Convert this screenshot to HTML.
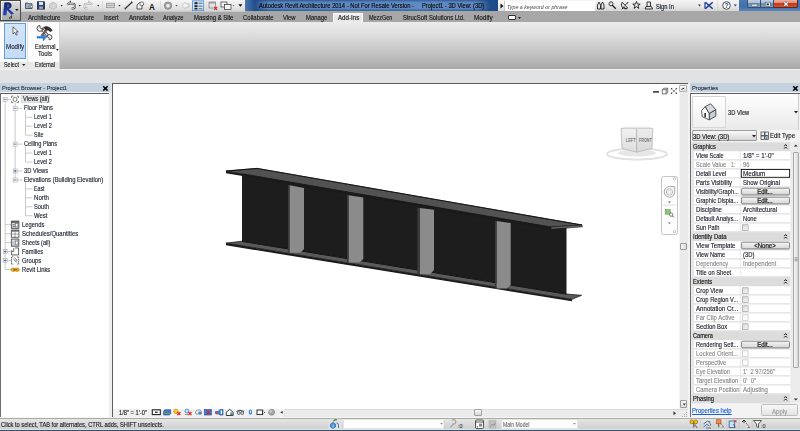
<!DOCTYPE html>
<html><head><meta charset="utf-8">
<style>
*{box-sizing:border-box;margin:0;padding:0}
html,body{width:800px;height:431px;overflow:hidden;background:#e1e2e4;font-family:"Liberation Sans",sans-serif;font-size:5.8px;color:#1a1a1a;position:relative}
.a{position:absolute}
.t{position:absolute;white-space:pre;line-height:1;transform-origin:0 0;-webkit-text-stroke:0.14px currentColor}
svg{position:absolute;overflow:visible}
</style></head><body>
<div class="a" style="left:0px;top:0px;width:800px;height:11.25px;background:linear-gradient(#f6f6f6,#e6e6e6 60%,#d6d6d6)"></div>
<div class="a" style="left:245px;top:0px;width:253px;height:11.25px;background:linear-gradient(90deg,#4a78b2 0%,#1f4c88 4%,#23508c 30%,#2a5a96 70%,#24528e 92%,#1c4a86 100%)"></div>
<div class="a" style="left:254px;top:1.2px;width:236px;height:8.8px;background:linear-gradient(90deg,rgba(120,160,215,0),rgba(120,160,215,0.7) 6%,rgba(120,160,215,0.7) 94%,rgba(120,160,215,0));border-radius:4px;filter:blur(1px)"></div>
<div class="t" style="left:259px;top:3px;font-size:6.4px;color:#0a0a0a;transform:scaleX(0.9110);">Autodesk Revit Architecture 2014 - Not For Resale Version -</div>
<div class="t" style="left:422px;top:3px;font-size:6.4px;color:#0a0a0a;transform:scaleX(0.9058);">Project1 - 3D View: (3D)</div>
<div class="a" style="left:498px;top:0.5px;width:7px;height:10.5px;background:linear-gradient(#fafafa,#dcdcdc);border-right:1px solid #c8c8c8"></div>
<svg style="left:500px;top:3px" width="4" height="6"><polygon points="0.5,0.5 3.5,3 0.5,5.5" fill="#111"/></svg>
<div class="a" style="left:505px;top:1px;width:90px;height:9.5px;background:#fff"></div>
<div class="t" style="left:506.8px;top:5px;font-size:5.8px;color:#4a4a4a;transform:scaleX(0.9085);font-style:italic;-webkit-text-stroke:0">Type a keyword or phrase</div>
<div class="a" style="left:739px;top:0px;width:61px;height:11.25px;background:linear-gradient(#4f7bb0,#4070a8 60%,#5a86bc)"></div>
<div class="a" style="left:747px;top:0px;width:14.3px;height:8.3px;background:linear-gradient(#c4d2e2,#a6bad2 45%,#6f8db2 50%,#7c9aba);border:0.7px solid #34506e;border-top:none;border-radius:0 0 0 2.5px"></div>
<div class="a" style="left:761.3px;top:0px;width:12.9px;height:8.3px;background:linear-gradient(#c4d2e2,#a6bad2 45%,#6f8db2 50%,#7c9aba);border:0.7px solid #34506e;border-top:none;border-left:none"></div>
<div class="a" style="left:774.2px;top:0px;width:24.2px;height:8.3px;background:linear-gradient(#eab0a2,#dd8a78 45%,#c8381a 50%,#d2502e);border:0.7px solid #5a2a22;border-top:none;border-left:none;border-radius:0 0 2.5px 0"></div>
<svg style="left:0;top:0" width="800" height="11" viewBox="0 0 800 11">
<rect x="751.6" y="4.2" width="5.6" height="2" rx="0.4" fill="#fff" stroke="#2a3a50" stroke-width="0.5"/>
<rect x="765.2" y="2.2" width="5" height="4.4" fill="#fff" stroke="#2a3a50" stroke-width="0.5"/><rect x="766.5" y="3.4" width="2.4" height="2" fill="#2a3a50"/>
<path d="M784.2,2.2 l3.6,3.6 M787.8,2.2 l-3.6,3.6" stroke="#5a2018" stroke-width="2.3"/>
<path d="M784.2,2.2 l3.6,3.6 M787.8,2.2 l-3.6,3.6" stroke="#fff" stroke-width="1.3"/>
</svg>
<div class="a" style="left:0px;top:11.25px;width:800px;height:10.75px;background:#a7a7a7"></div>
<div class="a" style="left:20.5px;top:11.25px;width:224.5px;height:0.8px;background:#c8c8c8"></div>
<div class="a" style="left:333.1px;top:13.2px;width:29.5px;height:9px;background:linear-gradient(#eeeeee,#e4e4e4 60%,#ececec);border:1px solid #fbfbfb;border-bottom:none;border-radius:1px 1px 0 0"></div>
<div class="t" style="left:27.5px;top:15px;font-size:6.6px;color:#15171a;transform:scaleX(0.9236);">Architecture</div>
<div class="t" style="left:70px;top:15px;font-size:6.6px;color:#15171a;transform:scaleX(0.8967);">Structure</div>
<div class="t" style="left:104px;top:15px;font-size:6.6px;color:#15171a;transform:scaleX(0.8788);">Insert</div>
<div class="t" style="left:128.5px;top:15px;font-size:6.6px;color:#15171a;transform:scaleX(0.9316);">Annotate</div>
<div class="t" style="left:163.1px;top:15px;font-size:6.6px;color:#15171a;transform:scaleX(0.8778);">Analyze</div>
<div class="t" style="left:193.75px;top:15px;font-size:6.6px;color:#15171a;transform:scaleX(0.8958);">Massing &amp; Site</div>
<div class="t" style="left:243.1px;top:15px;font-size:6.6px;color:#15171a;transform:scaleX(0.9071);">Collaborate</div>
<div class="t" style="left:283.1px;top:15px;font-size:6.6px;color:#15171a;transform:scaleX(0.8811);">View</div>
<div class="t" style="left:306.25px;top:15px;font-size:6.6px;color:#15171a;transform:scaleX(0.8912);">Manage</div>
<div class="t" style="left:337.75px;top:15px;font-size:6.6px;color:#15171a;transform:scaleX(0.9347);">Add-Ins</div>
<div class="t" style="left:368.75px;top:15px;font-size:6.6px;color:#15171a;transform:scaleX(0.8292);">MezzGen</div>
<div class="t" style="left:402.75px;top:15px;font-size:6.6px;color:#15171a;transform:scaleX(0.8940);">StrucSoft Solutions Ltd.</div>
<div class="t" style="left:474px;top:15px;font-size:6.6px;color:#15171a;transform:scaleX(0.9654);">Modify</div>
<div class="a" style="left:508px;top:14.5px;width:8px;height:5px;background:#fff;border:1px solid #333;border-radius:1px"></div>
<svg style="left:518px;top:16.5px" width="4" height="3"><polygon points="0,0 3,0 1.5,2" fill="#222"/></svg>
<div class="a" style="left:0px;top:0px;width:20.8px;height:21px;background:linear-gradient(#dcdcdc,#c4c4c4 50%,#a9a9a9);border:1px solid #4a4a4a;box-shadow:inset 0.8px 0.8px 0 #f4f4f4"></div>
<svg style="left:0;top:0" width="21" height="21" viewBox="0 0 21 21">
<defs><linearGradient id="rg" x1="0" y1="0" x2="0" y2="1"><stop offset="0" stop-color="#0f2160"/><stop offset="0.5" stop-color="#1a3590"/><stop offset="1" stop-color="#2648b8"/></linearGradient></defs>
<path d="M4.4,2.6 L7.4,2.2 C11.8,1.6 12.6,6.2 10.6,8 C10,8.5 9.4,8.8 8.8,9 L14,13.6 L11.4,14.8 L6.9,10 L6.6,15.2 L3,15.2 Z" fill="url(#rg)"/>
<path d="M7.2,4.2 C9.2,4 9.8,6.4 8.2,7.2 L7,7.4 Z" fill="#c8c8c8" opacity="0.35"/>
<polygon points="15.2,9 18.6,9 16.9,11" fill="#111"/>
<path d="M9,18.2 L11.6,15.6 L11.6,18.2 Z" fill="none" stroke="#222" stroke-width="0.7"/>
</svg>
<svg style="left:0;top:0" width="245" height="11" viewBox="0 0 245 11">
<path d="M25.5,3 h2.5 l0.8,0.8 h3.2 v4.7 h-6.5z" fill="#9fb1c6" stroke="#2f3b4a" stroke-width="0.8"/>
<path d="M28.5,6.2 h2.5 v-1.2 l2,1.6 l-2,1.6 v-1.2 h-2.5z" fill="#fff" stroke="#333" stroke-width="0.4"/>
<rect x="37.4" y="1.8" width="7.2" height="7.3" fill="#28406a" stroke="#151d2c" stroke-width="0.7"/><rect x="39" y="2.1" width="4" height="2.8" fill="#e8eef6"/><rect x="39.2" y="6.4" width="3.6" height="2.5" fill="#9aaac0"/>
<path d="M49.5,4 l3.5,-2 l3.5,2 v3.5 l-3.5,2 l-3.5,-2z" fill="#cfcfcf" stroke="#b4b4b4" stroke-width="0.6"/><path d="M49.5,4 l3.5,2 l3.5,-2 M53,6 v3.5" fill="none" stroke="#e8e8e8" stroke-width="0.5"/>
<polygon points="60.6,4.9 62.8,4.9 61.7,6.4" fill="#222"/>
<path d="M67.2,4.8 L70,2.4 V3.8 H72.8 C75.6,3.8 75.8,8.6 72.6,8.6 H71.5" fill="none" stroke="#4a4a4a" stroke-width="2"/>
<path d="M67.2,4.8 L70,2.4 V3.8 H72.8 C75.6,3.8 75.8,8.6 72.6,8.6 H71.5" fill="none" stroke="#fafafa" stroke-width="0.8"/>
<polygon points="78.6,4.9 80.8,4.9 79.7,6.4" fill="#222"/>
<path d="M92.2,4.8 L89.4,2.4 V3.8 H86.6 C83.8,3.8 83.6,8.6 86.8,8.6 H87.9" fill="none" stroke="#b0b0b0" stroke-width="2"/>
<path d="M92.2,4.8 L89.4,2.4 V3.8 H86.6 C83.8,3.8 83.6,8.6 86.8,8.6 H87.9" fill="none" stroke="#f4f4f4" stroke-width="0.8"/>
<polygon points="97.1,4.9 99.3,4.9 98.2,6.4" fill="#222"/>
<rect x="102.3" y="0.8" width="0.6" height="9.8" fill="#d0d0d0"/>
<rect x="106.5" y="3.2" width="8" height="4.5" fill="#d6d6d6" stroke="#8a8a8a" stroke-width="0.7"/><path d="M106.5,5.4 h8" stroke="#8a8a8a" stroke-width="0.6"/>
<polygon points="118.4,4.9 120.6,4.9 119.5,6.4" fill="#222"/>
<path d="M125,8.8 L132,2.2" stroke="#333" stroke-width="1.2"/><path d="M124.2,7.8 l1.8,1.8 M131.2,1.4 l1.8,1.8" stroke="#333" stroke-width="0.8"/>
<path d="M137,9 v-4 l2.5,-2.5 l2.5,2.5 v4z" fill="#eee" stroke="#333" stroke-width="0.8"/><circle cx="141.8" cy="3.8" r="1.9" fill="#fff" stroke="#333" stroke-width="0.7"/>
<text x="149" y="9.8" font-family="Liberation Sans" font-size="9.5" font-weight="bold" fill="#111" transform="translate(149 0) scale(0.85 1) translate(-149 0)">A</text>
<rect x="160.4" y="0.8" width="0.6" height="9.8" fill="#d0d0d0"/>
<circle cx="168" cy="5.6" r="3.7" fill="#bcbcbc" stroke="#6a6a6a" stroke-width="0.7"/><path d="M165.8,4.6 l2.2,-1.2 l2.2,1.2 v2.4 l-2.2,1.2 l-2.2,-1.2z" fill="#f2f2f2" stroke="#555" stroke-width="0.5"/>
<polygon points="175.4,4.9 177.6,4.9 176.5,6.4" fill="#444"/>
<path d="M182,5.5 l3,-3 l1.5,1.5 h2.5 v3 h-2.5 l-1.5,1.5z" fill="#f4f4f4" stroke="#b0b0b0" stroke-width="0.7"/>
<rect x="192.4" y="0.8" width="11.3" height="9.8" fill="#cde2f7" stroke="#4d8fd6" stroke-width="0.8"/>
<rect x="194.5" y="2.2" width="3" height="2" fill="#222"/><rect x="194.5" y="5.2" width="3" height="2" fill="#222"/><rect x="194.5" y="8" width="3" height="1.5" fill="#222"/>
<path d="M198.5,3.2 h4 M198.5,6.2 h4 M198.5,8.8 h4" stroke="#333" stroke-width="0.7"/>
<rect x="206" y="0.8" width="0.6" height="9.8" fill="#d0d0d0"/>
<rect x="209" y="2" width="6.5" height="6" fill="#e4e4e4" stroke="#777" stroke-width="0.7"/><rect x="209" y="2" width="6.5" height="1.5" fill="#999"/>
<path d="M214.2,6.8 l3,3 M217.2,6.8 l-3,3" stroke="#e02020" stroke-width="1.1"/>
<rect x="221" y="2" width="6" height="5" fill="#f4f4f4" stroke="#333" stroke-width="0.7"/><rect x="224.5" y="4.5" width="6.5" height="5" fill="#f4f4f4" stroke="#333" stroke-width="0.7"/>
<polygon points="232.5,4.9 234.5,4.9 233.5,6.3" fill="#666"/>
<polygon points="238.4,4.3 242.4,4.3 240.4,6.8" fill="#111"/>
</svg>
<svg style="left:0;top:0" width="800" height="11" viewBox="0 0 800 11">
<g stroke="#222" stroke-width="0.9" fill="none">
<path d="M597.5,9 v-4 l1.5,-3 l1.5,3 v4 z M601,9 v-4 l1.5,-3 l1.5,3 v4z"/>
<circle cx="611" cy="3.8" r="2"/><path d="M612.3,5.2 l3.5,3.5" stroke-width="1.3"/>
<path d="M621.8,9.3 l2.2,-2.6 l2.2,2.6 M622.2,2.4 a4,4 0 0 0 5.6,5.6 z M625,5.3 l2.6,-2.6 M627.6,2 v1.4"/>
<path d="M636.5,1.5 l1,2.6 h2.7 l-2.2,1.6 l0.9,2.7 l-2.4,-1.7 l-2.4,1.7 l0.9,-2.7 l-2.2,-1.6 h2.7z"/>
<path d="M647,6 v-4 h3.5 v4 M645,9 h7.5 l-1,-2.5 h-5.5z"/>
</g>
<polygon points="698,4.6 701,4.6 699.5,6.6" fill="#444"/>
<path d="M705.3,2.3 l3.7,3.2 l-3.7,3.2 M712.7,2.3 l-3.7,3.2 l3.7,3.2" stroke="#1a3a9a" stroke-width="1.5" fill="none"/><path d="M705,2.3 v6.4" stroke="#1a3a9a" stroke-width="1.2"/>
<rect x="717" y="0.5" width="0.6" height="10" fill="#d0d0d0"/>
<circle cx="726.5" cy="5.5" r="3.8" fill="#fff" stroke="#222" stroke-width="0.8"/>
<text x="724.6" y="8" font-family="Liberation Sans" font-size="6.5" font-weight="bold" fill="#1a3fa8">?</text>
<polygon points="733.8,4.6 736.8,4.6 735.3,6.6" fill="#444"/>
</svg>
<div class="t" style="left:655.6px;top:4px;font-size:6.6px;color:#101a2a;transform:scaleX(0.8718);">Sign In</div>
<div class="a" style="left:0px;top:22px;width:800px;height:46.5px;background:linear-gradient(#ececec,#dcdcdc 30%,#b9b9b9 80%,#a9a9a9)"></div>
<div class="a" style="left:0px;top:22px;width:60.3px;height:46.5px;background:#fcfcfc;border-right:1px solid #d4d4d4"></div>
<div class="a" style="left:0px;top:61px;width:60.3px;height:7.5px;background:#e8e8e8;border-top:1px solid #f7f7f7;border-right:1px solid #d4d4d4"></div>
<div class="a" style="left:27.3px;top:23px;width:0.8px;height:45.5px;background:#e2e2e2"></div>
<div class="a" style="left:4px;top:23px;width:22px;height:36.4px;background:linear-gradient(#d3e5f8,#c4dbf4);border:1px solid #5f9fe0"></div>
<svg style="left:12px;top:26px" width="7" height="10" viewBox="0 0 7 10"><path d="M1,0.8 L1,8 L2.8,6.3 L4.2,9.2 L5.3,8.7 L4,5.8 L6.3,5.8 Z" fill="#fff" stroke="#333" stroke-width="0.7"/></svg>
<div class="t" style="left:5.8px;top:44px;font-size:6.6px;color:#1a2233;transform:scaleX(0.9371);">Modify</div>
<div class="t" style="left:3.9px;top:62px;font-size:6.6px;color:#222;transform:scaleX(0.8239);">Select</div>
<svg style="left:22px;top:64px" width="4" height="3"><polygon points="0,0 3.5,0 1.75,2" fill="#222"/></svg>
<svg style="left:33px;top:22px" width="24" height="20" viewBox="0 0 24 20">
<path d="M8.5,6.5 L15,14" stroke="#333" stroke-width="2.8"/>
<path d="M8.5,6.5 L15,14" stroke="#d8dee6" stroke-width="1.5"/>
<path d="M6.8,3.4 a3,3 0 1 0 3.2,3.4 l-1.6,0.2 l-1.2,-1.4 z" fill="#f4f4f4" stroke="#222" stroke-width="0.8"/>
<path d="M16.3,17.8 a2.6,2.6 0 1 0 -2.6,-3 l1.4,0.1 l1,1.2 z" fill="#f4f4f4" stroke="#222" stroke-width="0.8"/>
<path d="M14.5,7.2 L8.2,13.8" stroke="#5a3020" stroke-width="1.7"/>
<path d="M14.5,7.2 L8.2,13.8" stroke="#d87a48" stroke-width="0.7"/>
<path d="M10.5,5.2 q4.5,-2.3 8.8,3 l-1.6,1.6 l-3.6,-2.4 l-1.2,0.6 z" fill="#2e3238" stroke="#1a1a1a" stroke-width="0.5"/>
<rect x="3.8" y="14.2" width="7" height="2.2" fill="#2a7ad8"/>
<polygon points="10,11.6 13.6,15.3 10,19" fill="#3a8ae8" stroke="#1a5ab0" stroke-width="0.4"/>
</svg>
<div class="t" style="left:34.9px;top:44px;font-size:6.6px;color:#222;transform:scaleX(0.8470);">External</div>
<div class="t" style="left:38.4px;top:51px;font-size:6.6px;color:#222;transform:scaleX(0.9022);">Tools</div>
<svg style="left:56px;top:49px" width="4" height="3"><polygon points="0,0 2.8,0 1.4,1.8" fill="#222"/></svg>
<div class="t" style="left:34.9px;top:62px;font-size:6.6px;color:#222;transform:scaleX(0.8305);">External</div>
<div class="a" style="left:0px;top:68.5px;width:800px;height:0.8px;background:#f0f0f0"></div>
<div class="a" style="left:0px;top:83px;width:109.7px;height:9.2px;background:#c4d2df"></div>
<div class="a" style="left:0px;top:92.2px;width:109.7px;height:0.8px;background:#f4f4f4"></div>
<div class="t" style="left:1.75px;top:86px;font-size:5.8px;color:#2c3440;transform:scaleX(0.9689);">Project Browser - Project1</div>
<svg style="left:101.5px;top:85px" width="7" height="7" viewBox="0 0 7 7"><path d="M1.2,1.2 L5.6,5.6 M5.6,1.2 L1.2,5.6" stroke="#000" stroke-width="1.5"/></svg>
<div class="a" style="left:0px;top:93px;width:109px;height:324px;background:#fff;border-top:1px solid #5e5e5e;border-left:1px solid #6e6e6e"></div>
<div class="a" style="left:109px;top:93px;width:3px;height:324px;background:#efefef"></div>
<div class="a" style="left:21px;top:95px;width:28.5px;height:7.5px;background:#e6e6e6;border:0.5px solid #dadada"></div>
<svg style="left:0;top:0" width="110" height="431" viewBox="0 0 110 431"><line x1="5.2" y1="101.9" x2="5.2" y2="269.45" stroke="#b5b5b5" stroke-width="0.7"/><line x1="15.2" y1="102.9" x2="15.2" y2="179.95" stroke="#b5b5b5" stroke-width="0.7"/><line x1="25.5" y1="110.85000000000001" x2="25.5" y2="135.2" stroke="#b5b5b5" stroke-width="0.7"/><line x1="25.5" y1="146.65" x2="25.5" y2="162.05" stroke="#b5b5b5" stroke-width="0.7"/><line x1="25.5" y1="182.45" x2="25.5" y2="215.75" stroke="#b5b5b5" stroke-width="0.7"/><line x1="17.5" y1="108.35000000000001" x2="22.5" y2="108.35000000000001" stroke="#b5b5b5" stroke-width="0.7"/><line x1="25.5" y1="117.30000000000001" x2="32.5" y2="117.30000000000001" stroke="#b5b5b5" stroke-width="0.7"/><line x1="25.5" y1="126.25" x2="32.5" y2="126.25" stroke="#b5b5b5" stroke-width="0.7"/><line x1="25.5" y1="135.2" x2="32.5" y2="135.2" stroke="#b5b5b5" stroke-width="0.7"/><line x1="17.5" y1="144.15" x2="22.5" y2="144.15" stroke="#b5b5b5" stroke-width="0.7"/><line x1="25.5" y1="153.1" x2="32.5" y2="153.1" stroke="#b5b5b5" stroke-width="0.7"/><line x1="25.5" y1="162.05" x2="32.5" y2="162.05" stroke="#b5b5b5" stroke-width="0.7"/><line x1="17.5" y1="171.0" x2="22.5" y2="171.0" stroke="#b5b5b5" stroke-width="0.7"/><line x1="17.5" y1="179.95" x2="22.5" y2="179.95" stroke="#b5b5b5" stroke-width="0.7"/><line x1="25.5" y1="188.9" x2="32.5" y2="188.9" stroke="#b5b5b5" stroke-width="0.7"/><line x1="25.5" y1="197.85" x2="32.5" y2="197.85" stroke="#b5b5b5" stroke-width="0.7"/><line x1="25.5" y1="206.8" x2="32.5" y2="206.8" stroke="#b5b5b5" stroke-width="0.7"/><line x1="25.5" y1="215.75" x2="32.5" y2="215.75" stroke="#b5b5b5" stroke-width="0.7"/><line x1="5.2" y1="224.7" x2="11" y2="224.7" stroke="#b5b5b5" stroke-width="0.7"/><line x1="5.2" y1="233.65" x2="11" y2="233.65" stroke="#b5b5b5" stroke-width="0.7"/><line x1="5.2" y1="242.6" x2="11" y2="242.6" stroke="#b5b5b5" stroke-width="0.7"/><line x1="5.2" y1="251.54999999999998" x2="11" y2="251.54999999999998" stroke="#b5b5b5" stroke-width="0.7"/><line x1="5.2" y1="260.5" x2="11" y2="260.5" stroke="#b5b5b5" stroke-width="0.7"/><line x1="5.2" y1="269.45" x2="11" y2="269.45" stroke="#b5b5b5" stroke-width="0.7"/><line x1="7.2" y1="99.4" x2="11" y2="99.4" stroke="#b5b5b5" stroke-width="0.7"/></svg>
<svg style="left:0;top:0" width="110" height="431" viewBox="0 0 110 431"><rect x="3.2" y="97.4" width="4" height="4" fill="#fff" stroke="#a8a8a8" stroke-width="0.6"/><line x1="3.9000000000000004" y1="99.4" x2="6.5" y2="99.4" stroke="#3a5a9a" stroke-width="0.8"/><rect x="13.2" y="106.35000000000001" width="4" height="4" fill="#fff" stroke="#a8a8a8" stroke-width="0.6"/><line x1="13.899999999999999" y1="108.35000000000001" x2="16.5" y2="108.35000000000001" stroke="#3a5a9a" stroke-width="0.8"/><rect x="13.2" y="142.15" width="4" height="4" fill="#fff" stroke="#a8a8a8" stroke-width="0.6"/><line x1="13.899999999999999" y1="144.15" x2="16.5" y2="144.15" stroke="#3a5a9a" stroke-width="0.8"/><rect x="13.2" y="169.0" width="4" height="4" fill="#fff" stroke="#a8a8a8" stroke-width="0.6"/><line x1="13.899999999999999" y1="171.0" x2="16.5" y2="171.0" stroke="#3a5a9a" stroke-width="0.8"/><line x1="15.2" y1="169.7" x2="15.2" y2="172.3" stroke="#3a5a9a" stroke-width="0.8"/><rect x="13.2" y="177.95" width="4" height="4" fill="#fff" stroke="#a8a8a8" stroke-width="0.6"/><line x1="13.899999999999999" y1="179.95" x2="16.5" y2="179.95" stroke="#3a5a9a" stroke-width="0.8"/><rect x="3.2" y="249.54999999999998" width="4" height="4" fill="#fff" stroke="#a8a8a8" stroke-width="0.6"/><line x1="3.9000000000000004" y1="251.54999999999998" x2="6.5" y2="251.54999999999998" stroke="#3a5a9a" stroke-width="0.8"/><line x1="5.2" y1="250.24999999999997" x2="5.2" y2="252.85" stroke="#3a5a9a" stroke-width="0.8"/><rect x="3.2" y="258.5" width="4" height="4" fill="#fff" stroke="#a8a8a8" stroke-width="0.6"/><line x1="3.9000000000000004" y1="260.5" x2="6.5" y2="260.5" stroke="#3a5a9a" stroke-width="0.8"/><line x1="5.2" y1="259.2" x2="5.2" y2="261.8" stroke="#3a5a9a" stroke-width="0.8"/><path d="M11.5,97.9 v-1.8 h1.8 M16.7,96.10000000000001 h1.8 v1.8 M18.5,100.9 v1.8 h-1.8 M13.3,102.7 h-1.8 v-1.8" fill="none" stroke="#555" stroke-width="0.7"/><rect x="13.2" y="97.4" width="3.6" height="4" rx="1.3" fill="none" stroke="#444" stroke-width="0.7"/><rect x="11.3" y="221.1" width="7.6" height="7.2" fill="#d0d7e0" stroke="#3a3a3a" stroke-width="0.8"/><rect x="11.3" y="221.1" width="7.6" height="1.7" fill="#555"/><path d="M12.6,224.7 h2.2 M12.6,226.5 h2.2" stroke="#333" stroke-width="0.6"/><rect x="15.6" y="223.7" width="2.3" height="3.2" fill="#fff" stroke="#555" stroke-width="0.5"/><rect x="11.3" y="230.05" width="7.6" height="7.2" fill="#fff" stroke="#3a3a3a" stroke-width="0.8"/><rect x="11.3" y="230.05" width="7.6" height="1.6" fill="#666"/><path d="M11.3,234.05 h7.6 M15.1,231.65 v5.6" stroke="#666" stroke-width="0.6"/><rect x="11.3" y="239.0" width="7.6" height="7.2" fill="#c4cad4" stroke="#4a4a4a" stroke-width="0.8"/><rect x="15.4" y="241.0" width="2.6" height="3.6" fill="#fff" stroke="#555" stroke-width="0.5"/><path d="M12.5,240.4 h2" stroke="#fff" stroke-width="0.7"/><path d="M11.6,250.35 v4.6 h7 v-7 h-3.5" fill="#fff" stroke="#3a3a3a" stroke-width="0.8"/><path d="M13.8,247.95 v3.4 h-2.2" fill="none" stroke="#3a3a3a" stroke-width="0.7"/><path d="M13.3,256.9 h-1.8 v7.2 h1.8 M16.9,256.9 h1.8 v7.2 h-1.8" fill="none" stroke="#3a3a3a" stroke-width="0.8" stroke-dasharray="1.4 0.6"/><path d="M13.2,258.9 l3.6,3.4 M14.6,257.9 l2.6,2.4 l-1,1" fill="none" stroke="#333" stroke-width="0.7"/><ellipse cx="13.3" cy="269.75" rx="2.4" ry="1.7" fill="#f0b020" stroke="#b07800" stroke-width="0.6"/><ellipse cx="17" cy="269.75" rx="2.4" ry="1.7" fill="#f0b020" stroke="#b07800" stroke-width="0.6"/><path d="M13,269.75 h4.3" stroke="#7a5000" stroke-width="0.8"/></svg>
<div class="t" style="left:22.5px;top:96px;font-size:6.6px;color:#1c2030;transform:scaleX(0.8648);">Views (all)</div>
<div class="t" style="left:24px;top:105px;font-size:6.6px;color:#1c2030;transform:scaleX(0.8663);">Floor Plans</div>
<div class="t" style="left:34px;top:114px;font-size:6.6px;color:#1c2030;transform:scaleX(0.8370);">Level 1</div>
<div class="t" style="left:34px;top:123px;font-size:6.6px;color:#1c2030;transform:scaleX(0.8370);">Level 2</div>
<div class="t" style="left:34px;top:132px;font-size:6.6px;color:#1c2030;transform:scaleX(0.8352);">Site</div>
<div class="t" style="left:24px;top:141px;font-size:6.6px;color:#1c2030;transform:scaleX(0.8601);">Ceiling Plans</div>
<div class="t" style="left:34px;top:150px;font-size:6.6px;color:#1c2030;transform:scaleX(0.8370);">Level 1</div>
<div class="t" style="left:34px;top:159px;font-size:6.6px;color:#1c2030;transform:scaleX(0.8370);">Level 2</div>
<div class="t" style="left:24px;top:168px;font-size:6.6px;color:#1c2030;transform:scaleX(0.8690);">3D Views</div>
<div class="t" style="left:24px;top:177px;font-size:6.6px;color:#1c2030;transform:scaleX(0.8891);">Elevations (Building Elevation)</div>
<div class="t" style="left:34px;top:186px;font-size:6.6px;color:#1c2030;transform:scaleX(0.8028);">East</div>
<div class="t" style="left:34px;top:195px;font-size:6.6px;color:#1c2030;transform:scaleX(0.9302);">North</div>
<div class="t" style="left:34px;top:204px;font-size:6.6px;color:#1c2030;transform:scaleX(0.8704);">South</div>
<div class="t" style="left:34px;top:213px;font-size:6.6px;color:#1c2030;transform:scaleX(0.8990);">West</div>
<div class="t" style="left:22px;top:222px;font-size:6.6px;color:#1c2030;transform:scaleX(0.8810);">Legends</div>
<div class="t" style="left:22px;top:231px;font-size:6.6px;color:#1c2030;transform:scaleX(0.9019);">Schedules/Quantities</div>
<div class="t" style="left:22px;top:240px;font-size:6.6px;color:#1c2030;transform:scaleX(0.8543);">Sheets (all)</div>
<div class="t" style="left:22px;top:249px;font-size:6.6px;color:#1c2030;transform:scaleX(0.8637);">Families</div>
<div class="t" style="left:22px;top:258px;font-size:6.6px;color:#1c2030;transform:scaleX(0.8879);">Groups</div>
<div class="t" style="left:22px;top:267px;font-size:6.6px;color:#1c2030;transform:scaleX(0.8744);">Revit Links</div>
<div class="a" style="left:112px;top:83px;width:576px;height:334px;background:#fff;border-top:1px solid #5c5c5c;border-left:1px solid #5c5c5c"></div>
<div class="a" style="left:679px;top:84px;width:8.5px;height:324.5px;background:#eaeaea;border-left:0.5px solid #f4f4f4"></div>
<div class="a" style="left:679.3px;top:84.8px;width:7.7px;height:7.3px;background:linear-gradient(#fafafa,#dedede);border:0.6px solid #b4b4b4;border-radius:1px"></div>
<svg style="left:681px;top:87px" width="5" height="4"><path d="M0.5,2.3 L3.3,1.2" stroke="#222" stroke-width="0.9"/></svg>
<div class="a" style="left:680px;top:242.5px;width:7px;height:7px;background:linear-gradient(90deg,#f8f8f8,#d8d8d8);border:0.6px solid #9a9a9a;border-radius:1px"></div>
<div class="a" style="left:680px;top:400px;width:7px;height:7.8px;background:linear-gradient(#fdfdfd,#dadada);border:0.6px solid #9a9a9a;border-radius:1px"></div>
<svg style="left:681.5px;top:402.5px" width="5" height="4"><polygon points="0.5,0.5 4,0.5 2.25,2.6" fill="#444"/></svg>
<div class="a" style="left:113px;top:408.75px;width:575px;height:8.25px;background:#ebebeb;border-top:0.6px solid #dedede"></div>
<div class="a" style="left:113px;top:409.3px;width:172px;height:7.7px;background:#f0f0f0;border-right:0.6px solid #e0e0e0"></div>
<div class="a" style="left:474px;top:408.5px;width:8px;height:7px;background:linear-gradient(#fafafa,#d6d6d6);border:0.6px solid #a0a0a0;border-radius:1px"></div>
<svg style="left:672.5px;top:410.5px" width="4" height="5"><polygon points="0.5,0.3 3,2.3 0.5,4.3" fill="#333"/></svg>
<div class="t" style="left:118.75px;top:410px;font-size:6.6px;color:#222;transform:scaleX(0.8707);">1/8" = 1'-0"</div>
<svg style="left:682px;top:411px" width="6" height="6"><g fill="#b0b0b0"><rect x="4" y="1" width="1" height="1"/><rect x="2" y="3" width="1" height="1"/><rect x="4" y="3" width="1" height="1"/><rect x="0" y="5" width="1" height="1"/><rect x="2" y="5" width="1" height="1"/><rect x="4" y="5" width="1" height="1"/></g></svg>
<svg style="left:0;top:0" width="800" height="431" viewBox="0 0 800 431"><g stroke-width="0.8"><rect x="152.3" y="409.8" width="8" height="4.8" fill="#fff" stroke="#222" stroke-width="1.1"/><rect x="155" y="411.6" width="2.6" height="1.3" fill="#222"/><path d="M163.6,411 l1.5,-1.3 h5.6 v4 l-1.5,1.3 h-5.6z" fill="#3b7ad0" stroke="#1a4a98" stroke-width="0.6"/><rect x="164.4" y="411.8" width="4.6" height="1" fill="#e04040"/><rect x="164.4" y="412.8" width="4.6" height="1" fill="#40c060"/><circle cx="176" cy="411.5" r="2.2" fill="#f8c820" stroke="#d09000" stroke-width="0.6"/><path d="M176,408.3 v1 M173,411.5 h1 M174,409.5 l0.7,0.7" stroke="#e0a000" stroke-width="0.6"/><path d="M177.2,412 l3.2,3.2 M180.4,412 l-3.2,3.2" stroke="#e02020" stroke-width="1.1"/><circle cx="187" cy="411" r="2" fill="#cfe0f4" stroke="#3a6ab0" stroke-width="0.7"/><path d="M185,414.5 h3" stroke="#777" stroke-width="0.8"/><path d="M188.3,412 l3.2,3.2 M191.5,412 l-3.2,3.2" stroke="#e02020" stroke-width="1.1"/><path d="M195.5,412 a3,2.5 0 0 1 5,-1.5 l1,1 v2.5 h-5.5z" fill="#eee" stroke="#777" stroke-width="0.7"/><rect x="198.5" y="411.5" width="2.6" height="3" rx="0.8" fill="#3a8ae0"/><rect x="204.5" y="409.6" width="6.8" height="5.4" fill="#3a7ad0" stroke="#1a4a98" stroke-width="0.6"/><path d="M206.8,410.8 l3.5,3.5 M210.3,410.8 l-3.5,3.5" stroke="#e02020" stroke-width="1.1"/><path d="M215.5,411.5 h2.5 l2,-2 h3 v5.5 h-3 l-2,-1.5 h-2.5z" fill="#3a7ad0" stroke="#1a4a98" stroke-width="0.6"/><circle cx="217" cy="413.5" r="1.1" fill="#e04040"/><rect x="220.6" y="410.3" width="1.6" height="3.6" rx="0.7" fill="#fff"/><path d="M226.3,412.3 l3.4,-3 l3.4,3 v3.2 h-6.8z" fill="#fff" stroke="#222" stroke-width="0.9"/><rect x="230.3" y="412.5" width="2.4" height="2.6" fill="#3a9a80"/><path d="M236.5,411.5 q3,-2.5 7.5,0" fill="none" stroke="#222" stroke-width="0.9"/><circle cx="238.8" cy="413" r="1.5" fill="#bcd8f4" stroke="#333" stroke-width="0.6"/><circle cx="242.2" cy="413" r="1.5" fill="#bcd8f4" stroke="#333" stroke-width="0.6"/><path d="M250.4,409.5 a1.6,1.6 0 0 1 1.6,1.6 v2.4 l-1.6,1.6 l-1.6,-1.6 v-2.4 a1.6,1.6 0 0 1 1.6,-1.6z" fill="#3a8ae0"/><rect x="250" y="410.5" width="0.8" height="2.5" fill="#fff"/><rect x="257" y="410" width="5.5" height="4.6" fill="#fff" stroke="#222" stroke-width="0.9"/><g fill="#333"><circle cx="263" cy="410.8" r="0.6"/><circle cx="264.5" cy="412.3" r="0.6"/><circle cx="263" cy="413.8" r="0.6"/></g><circle cx="271.6" cy="412.3" r="3" fill="#a8a8a8" stroke="#7a7a7a" stroke-width="0.6"/><circle cx="270.6" cy="411.3" r="1.1" fill="#dcdcdc"/><polygon points="280.3,412.3 282.6,410.9 282.6,413.7" fill="#222"/></g></svg>
<div class="a" style="left:661px;top:176px;width:17px;height:58.5px;background:#fdfdfd;border:0.8px solid #c4c4c4;border-radius:2.5px"></div>
<svg style="left:661px;top:176px" width="17" height="59" viewBox="0 0 17 59">
<circle cx="13.5" cy="2.8" r="1.2" fill="#fff" stroke="#999" stroke-width="0.6"/>
<circle cx="13.5" cy="55.7" r="1.2" fill="#fff" stroke="#999" stroke-width="0.6"/>
<path d="M8.5,10.6 h5.3 v5.4 a5.3,5.3 0 1 1 -5.3,-5.4z" fill="#f2f2f2" stroke="#9a9a9a" stroke-width="0.8"/>
<circle cx="8.5" cy="16" r="3.1" fill="#fafafa" stroke="#a8a8a8" stroke-width="0.7"/>
<circle cx="8.5" cy="16" r="1.6" fill="none" stroke="#c4c4c4" stroke-width="0.5"/>
<polygon points="6.9,25.6 9.9,25.6 8.4,27.2" fill="#6a6a6a"/>
<line x1="2" y1="29" x2="15" y2="29" stroke="#d4d4d4" stroke-width="0.7"/>
<rect x="4.2" y="33.5" width="5.2" height="4.7" fill="#8cc47a" stroke="#5a9a4a" stroke-width="0.5"/>
<circle cx="10.2" cy="38.6" r="1.7" fill="#fff" stroke="#333" stroke-width="0.6"/><path d="M11.3,39.8 l1.6,1.6" stroke="#333" stroke-width="0.8"/>
<polygon points="6.9,46.4 9.9,46.4 8.4,48" fill="#6a6a6a"/>
</svg>
<svg style="left:0;top:0" width="800" height="431" viewBox="0 0 800 431">
<defs><linearGradient id="cl" x1="0" y1="0" x2="0" y2="1"><stop offset="0" stop-color="#f0f0f0"/><stop offset="1" stop-color="#dedede"/></linearGradient>
<linearGradient id="cr" x1="0" y1="0" x2="0" y2="1"><stop offset="0" stop-color="#ececec"/><stop offset="1" stop-color="#d8d8d8"/></linearGradient></defs>
<ellipse cx="637" cy="154" rx="30" ry="5.6" fill="none" stroke="#d6d6d6" stroke-width="1.8"/>
<ellipse cx="637" cy="154" rx="30" ry="5.6" fill="none" stroke="#f4f4f4" stroke-width="0.5"/>
<ellipse cx="637" cy="153" rx="19" ry="3.5" fill="#e6e6e6"/>
<polygon points="621,128.5 636.6,128.5 636.6,152.1 622,148.5" fill="url(#cl)" stroke="#b0b0b0" stroke-width="0.7"/>
<polygon points="636.6,128.5 652.8,128.5 652,148.5 636.6,152.1" fill="url(#cr)" stroke="#b0b0b0" stroke-width="0.7"/>
<polygon points="621,128.5 626,127.2 648,127.2 652.8,128.5" fill="#f8f8f8" stroke="#c4c4c4" stroke-width="0.5"/>
<text x="625.8" y="142" font-family="Liberation Sans" font-size="5.6" fill="#777" font-weight="bold" transform="translate(625.8 0) scale(0.7 1) translate(-625.8 0)">LEFT</text>
<text x="639" y="142" font-family="Liberation Sans" font-size="5.6" fill="#777" font-weight="bold" transform="translate(639 0) scale(0.66 1) translate(-639 0)">FRONT</text>
</svg>
<svg style="left:0;top:0" width="800" height="431" viewBox="0 0 800 431">
<rect x="653" y="91.1" width="6" height="1.6" rx="0.5" fill="#4a4a4a"/>
<path d="M662.3,89.5 l1.5,-1.3 h4 v4.5 l-1.5,1.3 h-4z" fill="#d8d8d8" stroke="#555" stroke-width="0.7"/><path d="M662.3,89.5 h4 v4.5 M666.3,89.5 l1.5,-1.3" fill="none" stroke="#555" stroke-width="0.6"/><rect x="663.2" y="90.3" width="1.6" height="2.8" fill="#fff"/>
<g fill="#333"><circle cx="671.6" cy="88.8" r="0.8"/><circle cx="676.3" cy="88.8" r="0.8"/><circle cx="671.6" cy="93.2" r="0.8"/><circle cx="676.3" cy="93.2" r="0.8"/><circle cx="674" cy="91" r="0.8"/></g>
<path d="M672.3,89.5 l3.3,3 M675.6,89.5 l-3.3,3" stroke="#888" stroke-width="0.6"/>
</svg>
<div class="a" style="left:690px;top:83px;width:110px;height:8.7px;background:#c4d2df"></div>
<div class="a" style="left:690px;top:91.7px;width:110px;height:1.3px;background:#f4f4f4"></div>
<div class="a" style="left:687.5px;top:83px;width:2.5px;height:334px;background:#f2f2f2"></div>
<div class="t" style="left:691.6px;top:86px;font-size:5.8px;color:#2c3440;transform:scaleX(0.9840);">Properties</div>
<svg style="left:791.5px;top:84.6px" width="7" height="7" viewBox="0 0 7 7"><path d="M1.2,1.2 L5.6,5.6 M5.6,1.2 L1.2,5.6" stroke="#000" stroke-width="1.5"/></svg>
<div class="a" style="left:690px;top:93px;width:110px;height:324px;background:#f3f3f3;border-top:1px solid #5e5e5e;border-left:1px solid #6e6e6e"></div>
<div class="a" style="left:691px;top:94px;width:107.6px;height:36px;background:linear-gradient(#fefefe,#f4f4f4 50%,#e9e9e9);border-right:0.7px solid #cfcfcf"></div>
<div class="a" style="left:692.3px;top:95.6px;width:33.4px;height:32.7px;background:linear-gradient(#ffffff,#f0f0f0);border:0.7px solid #d6d6d6;border-radius:1px"></div>
<svg style="left:0;top:0" width="800" height="431" viewBox="0 0 800 431">
<polygon points="709.2,113.5 715.8,109.6 715.8,116.2 709.2,119.9" fill="#c6ced8" stroke="#2a2a2a" stroke-width="0.75"/>
<polygon points="701.6,110.4 705.3,106.6 709.2,113.5 709.2,119.9 702.2,116.6" fill="#fbfbfb" stroke="#2a2a2a" stroke-width="0.75"/>
<polygon points="705.3,106.6 710.6,103.8 715.8,109.6 709.2,113.5" fill="#d6dbe2" stroke="#2a2a2a" stroke-width="0.75"/>
<rect x="704.4" y="113" width="1.5" height="4.3" fill="#222"/>
</svg>
<div class="t" style="left:727.8px;top:110px;font-size:6.6px;color:#222;transform:scaleX(0.8675);">3D View</div>
<svg style="left:793.5px;top:111px" width="5" height="4"><polygon points="0,0 4,0 2,2.4" fill="#222"/></svg>
<div class="a" style="left:691.5px;top:130.3px;width:65.5px;height:11.2px;background:linear-gradient(#f9f9f9,#e8e8e8 50%,#d6d6d6);border:0.7px solid #9c9c9c;border-radius:1px"></div>
<div class="t" style="left:693px;top:134px;font-size:6.6px;color:#111;transform:scaleX(0.8871);">3D View: (3D)</div>
<svg style="left:751.5px;top:135px" width="5" height="4"><polygon points="0,0 4,0 2,2.4" fill="#222"/></svg>
<svg style="left:759.5px;top:130.5px" width="10" height="10" viewBox="0 0 10 10">
<rect x="1" y="1" width="3.6" height="3.6" fill="#f4f4f4" stroke="#333" stroke-width="0.7"/>
<rect x="5" y="1" width="3.6" height="3.6" fill="#f4f4f4" stroke="#333" stroke-width="0.7"/>
<rect x="1" y="5" width="3.6" height="3.6" fill="#f4f4f4" stroke="#333" stroke-width="0.7"/>
<rect x="5" y="5" width="3.6" height="3.6" fill="#f4f4f4" stroke="#333" stroke-width="0.7"/>
<rect x="6.2" y="5.8" width="1.3" height="2.4" fill="#3a78c8"/>
</svg>
<div class="t" style="left:770.4px;top:133px;font-size:6.6px;color:#222;transform:scaleX(0.9132);">Edit Type</div>
<div class="a" style="left:691.5px;top:142.2px;width:98.70000000000005px;height:261.0px;background:#fff"></div>
<svg style="left:0;top:0" width="800" height="431" viewBox="0 0 800 431"><rect x="691.5" y="142.2" width="98.70000000000005" height="9.0" fill="#dcdcdc"/><path d="M784.2,146.1 l1.4,-1.5 l1.4,1.5 M784.2,148.5 l1.4,-1.5 l1.4,1.5" fill="none" stroke="#111" stroke-width="1"/><rect x="691.5" y="151.2" width="2.5" height="9.0" fill="#e6e6e6"/><line x1="694.0" y1="159.89999999999998" x2="790.2" y2="159.89999999999998" stroke="#c6c6c6" stroke-width="0.7"/><line x1="740.3" y1="151.2" x2="740.3" y2="160.2" stroke="#d8d8d8" stroke-width="0.6"/><rect x="691.5" y="160.2" width="2.5" height="9.0" fill="#e6e6e6"/><line x1="694.0" y1="168.89999999999998" x2="790.2" y2="168.89999999999998" stroke="#c6c6c6" stroke-width="0.7"/><line x1="740.3" y1="160.2" x2="740.3" y2="169.2" stroke="#d8d8d8" stroke-width="0.6"/><rect x="691.5" y="169.2" width="2.5" height="9.0" fill="#e6e6e6"/><line x1="694.0" y1="177.89999999999998" x2="790.2" y2="177.89999999999998" stroke="#c6c6c6" stroke-width="0.7"/><line x1="740.3" y1="169.2" x2="740.3" y2="178.2" stroke="#d8d8d8" stroke-width="0.6"/><rect x="741.3" y="169.5" width="48.30000000000009" height="7.8" fill="#fff" stroke="#111" stroke-width="0.9"/><rect x="691.5" y="178.2" width="2.5" height="9.0" fill="#e6e6e6"/><line x1="694.0" y1="186.89999999999998" x2="790.2" y2="186.89999999999998" stroke="#c6c6c6" stroke-width="0.7"/><line x1="740.3" y1="178.2" x2="740.3" y2="187.2" stroke="#d8d8d8" stroke-width="0.6"/><rect x="691.5" y="187.2" width="2.5" height="9.0" fill="#e6e6e6"/><line x1="694.0" y1="195.89999999999998" x2="790.2" y2="195.89999999999998" stroke="#c6c6c6" stroke-width="0.7"/><line x1="740.3" y1="187.2" x2="740.3" y2="196.2" stroke="#d8d8d8" stroke-width="0.6"/><rect x="741.5999999999999" y="188.2" width="47.90000000000009" height="6.7" rx="1" fill="url(#bg)" stroke="#6a6a6a" stroke-width="0.8"/><rect x="691.5" y="196.2" width="2.5" height="9.0" fill="#e6e6e6"/><line x1="694.0" y1="204.89999999999998" x2="790.2" y2="204.89999999999998" stroke="#c6c6c6" stroke-width="0.7"/><line x1="740.3" y1="196.2" x2="740.3" y2="205.2" stroke="#d8d8d8" stroke-width="0.6"/><rect x="741.5999999999999" y="197.2" width="47.90000000000009" height="6.7" rx="1" fill="url(#bg)" stroke="#6a6a6a" stroke-width="0.8"/><rect x="691.5" y="205.2" width="2.5" height="9.0" fill="#e6e6e6"/><line x1="694.0" y1="213.89999999999998" x2="790.2" y2="213.89999999999998" stroke="#c6c6c6" stroke-width="0.7"/><line x1="740.3" y1="205.2" x2="740.3" y2="214.2" stroke="#d8d8d8" stroke-width="0.6"/><rect x="691.5" y="214.2" width="2.5" height="9.0" fill="#e6e6e6"/><line x1="694.0" y1="222.89999999999998" x2="790.2" y2="222.89999999999998" stroke="#c6c6c6" stroke-width="0.7"/><line x1="740.3" y1="214.2" x2="740.3" y2="223.2" stroke="#d8d8d8" stroke-width="0.6"/><rect x="691.5" y="223.2" width="2.5" height="9.0" fill="#e6e6e6"/><line x1="694.0" y1="231.89999999999998" x2="790.2" y2="231.89999999999998" stroke="#c6c6c6" stroke-width="0.7"/><line x1="740.3" y1="223.2" x2="740.3" y2="232.2" stroke="#d8d8d8" stroke-width="0.6"/><rect x="742.5" y="224.79999999999998" width="5.6" height="5.6" fill="url(#cbg)" stroke="#a0a0a0" stroke-width="0.7"/><rect x="691.5" y="232.2" width="98.70000000000005" height="9.0" fill="#dcdcdc"/><path d="M784.2,236.1 l1.4,-1.5 l1.4,1.5 M784.2,238.5 l1.4,-1.5 l1.4,1.5" fill="none" stroke="#111" stroke-width="1"/><rect x="691.5" y="241.2" width="2.5" height="9.0" fill="#e6e6e6"/><line x1="694.0" y1="249.89999999999998" x2="790.2" y2="249.89999999999998" stroke="#c6c6c6" stroke-width="0.7"/><line x1="740.3" y1="241.2" x2="740.3" y2="250.2" stroke="#d8d8d8" stroke-width="0.6"/><rect x="741.5999999999999" y="242.2" width="47.90000000000009" height="6.7" rx="1" fill="url(#bg)" stroke="#6a6a6a" stroke-width="0.8"/><rect x="691.5" y="250.2" width="2.5" height="9.0" fill="#e6e6e6"/><line x1="694.0" y1="258.9" x2="790.2" y2="258.9" stroke="#c6c6c6" stroke-width="0.7"/><line x1="740.3" y1="250.2" x2="740.3" y2="259.2" stroke="#d8d8d8" stroke-width="0.6"/><rect x="691.5" y="259.2" width="2.5" height="9.0" fill="#e6e6e6"/><line x1="694.0" y1="267.9" x2="790.2" y2="267.9" stroke="#c6c6c6" stroke-width="0.7"/><line x1="740.3" y1="259.2" x2="740.3" y2="268.2" stroke="#d8d8d8" stroke-width="0.6"/><rect x="691.5" y="268.2" width="2.5" height="9.0" fill="#e6e6e6"/><line x1="694.0" y1="276.9" x2="790.2" y2="276.9" stroke="#c6c6c6" stroke-width="0.7"/><line x1="740.3" y1="268.2" x2="740.3" y2="277.2" stroke="#d8d8d8" stroke-width="0.6"/><rect x="691.5" y="277.2" width="98.70000000000005" height="9.0" fill="#dcdcdc"/><path d="M784.2,281.09999999999997 l1.4,-1.5 l1.4,1.5 M784.2,283.5 l1.4,-1.5 l1.4,1.5" fill="none" stroke="#111" stroke-width="1"/><rect x="691.5" y="286.2" width="2.5" height="9.0" fill="#e6e6e6"/><line x1="694.0" y1="294.9" x2="790.2" y2="294.9" stroke="#c6c6c6" stroke-width="0.7"/><line x1="740.3" y1="286.2" x2="740.3" y2="295.2" stroke="#d8d8d8" stroke-width="0.6"/><rect x="742.5" y="287.8" width="5.6" height="5.6" fill="url(#cbg)" stroke="#a0a0a0" stroke-width="0.7"/><rect x="691.5" y="295.2" width="2.5" height="9.0" fill="#e6e6e6"/><line x1="694.0" y1="303.9" x2="790.2" y2="303.9" stroke="#c6c6c6" stroke-width="0.7"/><line x1="740.3" y1="295.2" x2="740.3" y2="304.2" stroke="#d8d8d8" stroke-width="0.6"/><rect x="742.5" y="296.8" width="5.6" height="5.6" fill="url(#cbg)" stroke="#a0a0a0" stroke-width="0.7"/><rect x="691.5" y="304.2" width="2.5" height="9.0" fill="#e6e6e6"/><line x1="694.0" y1="312.9" x2="790.2" y2="312.9" stroke="#c6c6c6" stroke-width="0.7"/><line x1="740.3" y1="304.2" x2="740.3" y2="313.2" stroke="#d8d8d8" stroke-width="0.6"/><rect x="742.5" y="305.8" width="5.6" height="5.6" fill="url(#cbg)" stroke="#a0a0a0" stroke-width="0.7"/><rect x="691.5" y="313.2" width="2.5" height="9.0" fill="#e6e6e6"/><line x1="694.0" y1="321.9" x2="790.2" y2="321.9" stroke="#c6c6c6" stroke-width="0.7"/><line x1="740.3" y1="313.2" x2="740.3" y2="322.2" stroke="#d8d8d8" stroke-width="0.6"/><rect x="742.5" y="314.8" width="5.6" height="5.6" fill="#fafafa" stroke="#c4c4c4" stroke-width="0.7"/><rect x="691.5" y="322.2" width="2.5" height="9.0" fill="#e6e6e6"/><line x1="694.0" y1="330.9" x2="790.2" y2="330.9" stroke="#c6c6c6" stroke-width="0.7"/><line x1="740.3" y1="322.2" x2="740.3" y2="331.2" stroke="#d8d8d8" stroke-width="0.6"/><rect x="742.5" y="323.8" width="5.6" height="5.6" fill="url(#cbg)" stroke="#a0a0a0" stroke-width="0.7"/><rect x="691.5" y="331.2" width="98.70000000000005" height="9.0" fill="#dcdcdc"/><path d="M784.2,335.09999999999997 l1.4,-1.5 l1.4,1.5 M784.2,337.5 l1.4,-1.5 l1.4,1.5" fill="none" stroke="#111" stroke-width="1"/><rect x="691.5" y="340.2" width="2.5" height="9.0" fill="#e6e6e6"/><line x1="694.0" y1="348.9" x2="790.2" y2="348.9" stroke="#c6c6c6" stroke-width="0.7"/><line x1="740.3" y1="340.2" x2="740.3" y2="349.2" stroke="#d8d8d8" stroke-width="0.6"/><rect x="741.5999999999999" y="341.2" width="47.90000000000009" height="6.7" rx="1" fill="url(#bg)" stroke="#6a6a6a" stroke-width="0.8"/><rect x="691.5" y="349.2" width="2.5" height="9.0" fill="#e6e6e6"/><line x1="694.0" y1="357.9" x2="790.2" y2="357.9" stroke="#c6c6c6" stroke-width="0.7"/><line x1="740.3" y1="349.2" x2="740.3" y2="358.2" stroke="#d8d8d8" stroke-width="0.6"/><rect x="742.5" y="350.8" width="5.6" height="5.6" fill="#fafafa" stroke="#c4c4c4" stroke-width="0.7"/><rect x="691.5" y="358.2" width="2.5" height="9.0" fill="#e6e6e6"/><line x1="694.0" y1="366.9" x2="790.2" y2="366.9" stroke="#c6c6c6" stroke-width="0.7"/><line x1="740.3" y1="358.2" x2="740.3" y2="367.2" stroke="#d8d8d8" stroke-width="0.6"/><rect x="742.5" y="359.8" width="5.6" height="5.6" fill="#fafafa" stroke="#c4c4c4" stroke-width="0.7"/><rect x="691.5" y="367.2" width="2.5" height="9.0" fill="#e6e6e6"/><line x1="694.0" y1="375.9" x2="790.2" y2="375.9" stroke="#c6c6c6" stroke-width="0.7"/><line x1="740.3" y1="367.2" x2="740.3" y2="376.2" stroke="#d8d8d8" stroke-width="0.6"/><rect x="691.5" y="376.2" width="2.5" height="9.0" fill="#e6e6e6"/><line x1="694.0" y1="384.9" x2="790.2" y2="384.9" stroke="#c6c6c6" stroke-width="0.7"/><line x1="740.3" y1="376.2" x2="740.3" y2="385.2" stroke="#d8d8d8" stroke-width="0.6"/><rect x="691.5" y="385.2" width="2.5" height="9.0" fill="#e6e6e6"/><line x1="694.0" y1="393.9" x2="790.2" y2="393.9" stroke="#c6c6c6" stroke-width="0.7"/><line x1="740.3" y1="385.2" x2="740.3" y2="394.2" stroke="#d8d8d8" stroke-width="0.6"/><rect x="691.5" y="394.2" width="98.70000000000005" height="9.0" fill="#dcdcdc"/><path d="M784.2,398.09999999999997 l1.4,-1.5 l1.4,1.5 M784.2,400.5 l1.4,-1.5 l1.4,1.5" fill="none" stroke="#111" stroke-width="1"/><defs><linearGradient id="bg" x1="0" y1="0" x2="0" y2="1"><stop offset="0" stop-color="#f6f6f6"/><stop offset="1" stop-color="#d4d4d4"/></linearGradient><linearGradient id="cbg" x1="0" y1="0" x2="1" y2="1"><stop offset="0" stop-color="#d6d6d6"/><stop offset="1" stop-color="#f8f8f8"/></linearGradient></defs></svg>
<div class="t" style="left:693px;top:144px;font-size:6.6px;color:#111;transform:scaleX(0.8639);-webkit-text-stroke:0.15px #111">Graphics</div>
<div class="t" style="left:695.8px;top:153px;font-size:6.6px;color:#1c1c2c;transform:scaleX(0.8492);">View Scale</div>
<div class="t" style="left:743px;top:153px;font-size:6.6px;color:#1c1c2c;transform:scaleX(0.9578);">1/8" = 1'-0"</div>
<div class="t" style="left:695.8px;top:162px;font-size:6.6px;color:#8a8a8a;transform:scaleX(0.8702);">Scale Value</div>
<div class="t" style="left:731px;top:162px;font-size:6.6px;color:#8a8a8a;transform:scaleX(0.7273);">1:</div>
<div class="t" style="left:743px;top:162px;font-size:6.6px;color:#8a8a8a;transform:scaleX(0.8715);">96</div>
<div class="t" style="left:695.8px;top:171px;font-size:6.6px;color:#1c1c2c;transform:scaleX(0.8766);">Detail Level</div>
<div class="t" style="left:743px;top:171px;font-size:6.6px;color:#1c1c2c;transform:scaleX(0.9508);">Medium</div>
<div class="t" style="left:695.8px;top:180px;font-size:6.6px;color:#1c1c2c;transform:scaleX(0.8797);">Parts Visibility</div>
<div class="t" style="left:743px;top:180px;font-size:6.6px;color:#1c1c2c;transform:scaleX(0.9014);">Show Original</div>
<div class="t" style="left:695.8px;top:189px;font-size:6.6px;color:#1c1c2c;transform:scaleX(0.8700);">Visibility/Graph...</div>
<div class="t" style="left:740.3px;width:49.90000000000009px;text-align:center;top:189px;font-size:6.6px;color:#111;transform:scaleX(0.92);transform-origin:50% 0;-webkit-text-stroke:0.2px #111">Edit...</div>
<div class="t" style="left:695.8px;top:198px;font-size:6.6px;color:#1c1c2c;transform:scaleX(0.8656);">Graphic Displa...</div>
<div class="t" style="left:740.3px;width:49.90000000000009px;text-align:center;top:198px;font-size:6.6px;color:#111;transform:scaleX(0.92);transform-origin:50% 0;-webkit-text-stroke:0.2px #111">Edit...</div>
<div class="t" style="left:695.8px;top:207px;font-size:6.6px;color:#1c1c2c;transform:scaleX(0.9214);">Discipline</div>
<div class="t" style="left:743px;top:207px;font-size:6.6px;color:#1c1c2c;transform:scaleX(0.9275);">Architectural</div>
<div class="t" style="left:695.8px;top:216px;font-size:6.6px;color:#1c1c2c;transform:scaleX(0.8855);">Default Analys...</div>
<div class="t" style="left:743px;top:216px;font-size:6.6px;color:#1c1c2c;transform:scaleX(0.8700);">None</div>
<div class="t" style="left:695.8px;top:225px;font-size:6.6px;color:#1c1c2c;transform:scaleX(0.8622);">Sun Path</div>
<div class="t" style="left:693px;top:234px;font-size:6.6px;color:#111;transform:scaleX(0.9046);-webkit-text-stroke:0.15px #111">Identity Data</div>
<div class="t" style="left:695.8px;top:243px;font-size:6.6px;color:#1c1c2c;transform:scaleX(0.9263);">View Template</div>
<div class="t" style="left:740.3px;width:49.90000000000009px;text-align:center;top:243px;font-size:6.6px;color:#111;transform:scaleX(0.92);transform-origin:50% 0;-webkit-text-stroke:0.2px #111">&lt;None&gt;</div>
<div class="t" style="left:695.8px;top:252px;font-size:6.6px;color:#1c1c2c;transform:scaleX(0.8700);">View Name</div>
<div class="t" style="left:743px;top:252px;font-size:6.6px;color:#1c1c2c;transform:scaleX(0.8887);">(3D)</div>
<div class="t" style="left:695.8px;top:261px;font-size:6.6px;color:#8a8a8a;transform:scaleX(0.8700);">Dependency</div>
<div class="t" style="left:743px;top:261px;font-size:6.6px;color:#8a8a8a;transform:scaleX(0.9081);">Independent</div>
<div class="t" style="left:695.8px;top:270px;font-size:6.6px;color:#1c1c2c;transform:scaleX(0.8700);">Title on Sheet</div>
<div class="t" style="left:693px;top:279px;font-size:6.6px;color:#111;transform:scaleX(0.8700);-webkit-text-stroke:0.15px #111">Extents</div>
<div class="t" style="left:695.8px;top:288px;font-size:6.6px;color:#1c1c2c;transform:scaleX(0.8879);">Crop View</div>
<div class="t" style="left:695.8px;top:297px;font-size:6.6px;color:#1c1c2c;transform:scaleX(0.8766);">Crop Region V...</div>
<div class="t" style="left:695.8px;top:306px;font-size:6.6px;color:#1c1c2c;transform:scaleX(0.9284);">Annotation Cr...</div>
<div class="t" style="left:695.8px;top:315px;font-size:6.6px;color:#8a8a8a;transform:scaleX(0.9055);">Far Clip Active</div>
<div class="t" style="left:695.8px;top:324px;font-size:6.6px;color:#1c1c2c;transform:scaleX(0.8838);">Section Box</div>
<div class="t" style="left:693px;top:333px;font-size:6.6px;color:#111;transform:scaleX(0.8528);-webkit-text-stroke:0.15px #111">Camera</div>
<div class="t" style="left:695.8px;top:342px;font-size:6.6px;color:#1c1c2c;transform:scaleX(0.8528);">Rendering Sett...</div>
<div class="t" style="left:740.3px;width:49.90000000000009px;text-align:center;top:342px;font-size:6.6px;color:#111;transform:scaleX(0.92);transform-origin:50% 0;-webkit-text-stroke:0.2px #111">Edit...</div>
<div class="t" style="left:695.8px;top:351px;font-size:6.6px;color:#8a8a8a;transform:scaleX(0.9066);">Locked Orient...</div>
<div class="t" style="left:695.8px;top:360px;font-size:6.6px;color:#8a8a8a;transform:scaleX(0.8766);">Perspective</div>
<div class="t" style="left:695.8px;top:369px;font-size:6.6px;color:#8a8a8a;transform:scaleX(0.8406);">Eye Elevation</div>
<div class="t" style="left:743px;top:369px;font-size:6.6px;color:#8a8a8a;transform:scaleX(0.8714);">1'  2 97/256"</div>
<div class="t" style="left:695.8px;top:378px;font-size:6.6px;color:#8a8a8a;transform:scaleX(0.8922);">Target Elevation</div>
<div class="t" style="left:743px;top:378px;font-size:6.6px;color:#8a8a8a;transform:scaleX(0.8967);">0'  0"</div>
<div class="t" style="left:695.8px;top:387px;font-size:6.6px;color:#8a8a8a;transform:scaleX(0.8944);">Camera Position</div>
<div class="t" style="left:743px;top:387px;font-size:6.6px;color:#8a8a8a;transform:scaleX(0.9211);">Adjusting</div>
<div class="t" style="left:693px;top:396px;font-size:6.6px;color:#111;transform:scaleX(0.8807);-webkit-text-stroke:0.15px #111">Phasing</div>
<div class="a" style="left:790.6px;top:142.2px;width:9.4px;height:261.0px;background:#ebebeb"></div>
<div class="a" style="left:792.5px;top:151.8px;width:6.5px;height:216.2px;background:linear-gradient(90deg,#f6f6f6,#d8d8d8);border:0.6px solid #a8a8a8;border-radius:1px"></div>
<svg style="left:793px;top:257px" width="6" height="5"><path d="M1.5,0.8 h3 M1.5,2.3 h3 M1.5,3.8 h3" stroke="#666" stroke-width="0.6"/></svg>
<svg style="left:792.5px;top:144px" width="6" height="4"><polygon points="0.8,2.5 4.8,2.5 2.8,0.4" fill="#333"/></svg>
<svg style="left:792.5px;top:397.5px" width="6" height="4"><polygon points="0.8,0.5 4.8,0.5 2.8,2.6" fill="#333"/></svg>
<div class="t" style="left:692px;top:408px;font-size:6.6px;color:#1a5fd0;transform:scaleX(0.8927);text-decoration:underline">Properties help</div>
<div class="a" style="left:761.3px;top:404px;width:37px;height:12px;background:linear-gradient(#f7f7f7,#e4e4e4);border:0.7px solid #bdbdbd;border-radius:1.5px"></div>
<div class="t" style="left:772.2px;top:409px;font-size:6.6px;color:#9a9a9a;transform:scaleX(0.9212);">Apply</div>
<div class="a" style="left:0px;top:417px;width:800px;height:1px;background:#f6f6f6"></div>
<div class="a" style="left:0px;top:417.9px;width:800px;height:0.8px;background:#a9a9a9"></div>
<div class="a" style="left:0px;top:418.6px;width:800px;height:10.9px;background:linear-gradient(#e6e6e6,#dadada 50%,#d0d0d0)"></div>
<div class="a" style="left:0px;top:429.5px;width:800px;height:1.5px;background:#34506e"></div>
<div class="t" style="left:1px;top:422px;font-size:6.6px;color:#151a25;transform:scaleX(0.8668);">Click to select, TAB for alternates, CTRL adds, SHIFT unselects.</div>
<div class="a" style="left:342.5px;top:419px;width:101.3px;height:10.2px;background:#fff;border:0.5px solid #e6e6e6"></div>
<svg style="left:440px;top:423px" width="4" height="3"><polygon points="0,0 3,0 1.5,1.8" fill="#999"/></svg>
<div class="a" style="left:500.5px;top:419.2px;width:77px;height:10px;background:#fdfdfd;border:0.5px solid #e4e4e4"></div>
<div class="t" style="left:502.5px;top:422px;font-size:6.6px;color:#707070;transform:scaleX(0.7773);">Main Model</div>
<svg style="left:573px;top:423px" width="4" height="3"><polygon points="0,0 3,0 1.5,1.8" fill="#999"/></svg>
<svg style="left:0;top:0" width="800" height="431" viewBox="0 0 800 431"><g stroke-width="0.8"><rect x="328.5" y="418.8" width="13" height="10.6" fill="#e2e2e2"/><path d="M330.5,424 l2.5,-1.5 l2.5,1.5 v3 l-2.5,1.5 l-2.5,-1.5z" fill="#4a90d8" stroke="#1a5aa8" stroke-width="0.6"/><path d="M333,424.5 v3" stroke="#cfe6ff" stroke-width="0.8"/><path d="M333.5,421.5 a2.5,2.5 0 0 1 3.5,-1.5" fill="none" stroke="#3aa040" stroke-width="1.3"/><path d="M336.5,423 a2,2 0 0 1 2,2 v3" fill="none" stroke="#4a78b0" stroke-width="1"/><path d="M450.5,427.5 l2.5,-3.5 a2.2,2.2 0 1 0 -1,-3.6" fill="none" stroke="#a0a0a0" stroke-width="1.1"/><text x="457.5" y="427.6" font-family="Liberation Sans" font-size="6" fill="#111">:0</text><rect x="475.6" y="420" width="7.8" height="8.6" rx="1" fill="#fff" stroke="#333" stroke-width="0.9"/><path d="M475.6,422 h7.8" stroke="#333" stroke-width="0.8"/><rect x="479" y="423.6" width="3" height="3" fill="#888"/><circle cx="477.4" cy="426.8" r="0.6" fill="#222"/><rect x="489" y="420.2" width="7" height="8" fill="#c0c0c0" stroke="#b0b0b0" stroke-width="0.5"/><path d="M490,427 l2.5,-3 l1.5,1.5 l1.5,-3" fill="none" stroke="#888" stroke-width="0.8"/><g stroke-width="0.6"><path d="M700.2,419 v10 M713.8,419 v10 M726.6,419 v10 M739.4,419 v10 M752.2,419 v10" stroke="#c4c4c4"/><circle cx="691.8" cy="421.8" r="1.9" fill="#f5c000" stroke="#7a5a00"/><circle cx="695.8" cy="421.8" r="1.9" fill="#f5c000" stroke="#7a5a00"/><path d="M693.8,423 v4.5" stroke="#333" stroke-width="0.9"/><path d="M695,424.5 l2,3.5" stroke="#333" stroke-width="0.7"/><path d="M703.5,427 l3,-2.5 l2.5,1 M703.5,424 l4,-3 l3,1 M706,428 h5" fill="none" stroke="#2a5aa0" stroke-width="0.8"/><path d="M709,422 l2,3 l-1.5,0.5" fill="#fff" stroke="#333" stroke-width="0.6"/><rect x="716.5" y="419.8" width="4.5" height="4" fill="#f09040" stroke="#b04010"/><path d="M718.7,423.8 v3.5" stroke="#333" stroke-width="0.8"/><path d="M720.5,423.5 l3,3.5 l-1.8,0.2" fill="#fff" stroke="#333" stroke-width="0.6"/><rect x="729.2" y="421" width="5.5" height="6.5" fill="#cfe3f6" stroke="#2a5a9a" stroke-width="0.8"/><path d="M734,419.6 l2.8,2.8 M736.8,419.6 l-2.8,2.8" stroke="#e02020" stroke-width="0.9"/><path d="M733,424 l2.5,3.5" stroke="#333" stroke-width="0.6"/><path d="M742,422 l2,-2 l2,2 M744,420 v3 M742.5,421.5" fill="none" stroke="#111" stroke-width="0.8"/><path d="M746,423 l3.5,4.5 l-2,0" fill="#fff" stroke="#333" stroke-width="0.6"/><path d="M753.5,420.5 h8 l-3,3.5 v3.5 l-2,-1 v-2.5z" fill="#f4f4f4" stroke="#333" stroke-width="0.8"/></g><text x="761" y="428.2" font-family="Liberation Sans" font-size="5.5" fill="#111">:0</text></g></svg>
<svg style="left:0;top:0" width="800" height="431" viewBox="0 0 800 431">
<polygon points="242,172 566.5,228 566.5,294 242,241.2" fill="#1d1d1d"/>
<polygon points="226,243.1 242,241.2 566.5,294 581.6,295.3 572,299.3" fill="#5a5a5a" stroke="#111" stroke-width="0.7"/>
<polygon points="226,243.1 572,299.3 572,301.3 226,245.3" fill="#1a1a1a"/>
<line x1="242" y1="241.4" x2="566.5" y2="294.2" stroke="#0e0e0e" stroke-width="0.8"/>
<polygon points="226,171 257,168.4 582,225 551,227" fill="#525252" stroke="#161616" stroke-width="0.7"/>
<polygon points="226,171 551,227 551,229.2 226,173.2" fill="#1a1a1a"/>
<line x1="257" y1="168.4" x2="582" y2="225" stroke="#101010" stroke-width="0.9"/>
<polygon points="551,227 582,225 582.3,226.8 551,229.3" fill="#666" stroke="#111" stroke-width="0.6"/>
<line x1="226" y1="171" x2="257" y2="168.4" stroke="#101010" stroke-width="0.9"/>
<g fill="#8b8b8b">
<polygon points="289.5,185.3 304,188 304,249 300.5,252.8 289.5,252.8"/>
<polygon points="348.5,195.3 363.3,197.5 363.3,259 359.5,262.6 348.5,262.6"/>
<polygon points="419.7,208 434,209.7 434,270 430,274.3 419.7,274.3"/>
<polygon points="496.5,221 510.7,223 510.7,285 506.7,288.4 496.5,288.4"/>
</g>
<g fill="#3a3a3a">
<polygon points="288,185.1 289.5,185.3 289.5,252.8 288,252.8"/>
<polygon points="347,195.1 348.5,195.3 348.5,262.6 347,262.6"/>
<polygon points="417.3,207.8 419.7,208 419.7,274.3 417.3,274.3"/>
<polygon points="495,220.8 496.5,221 496.5,288.4 495,288.4"/>
</g>
</svg>
</body></html>
